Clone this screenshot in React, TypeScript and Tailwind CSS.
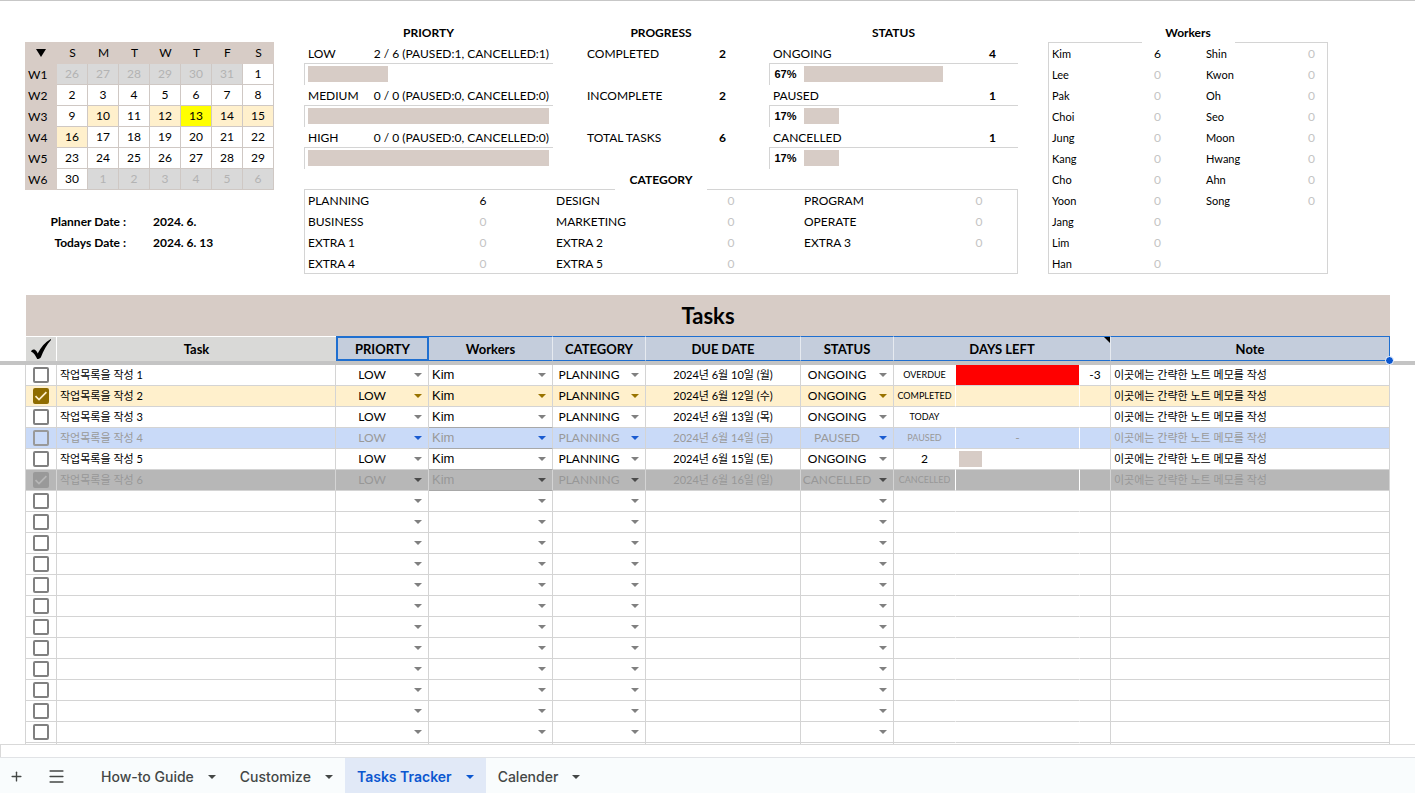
import React from 'react';
import { Menu, Plus } from 'lucide-react';

const BASE_FONT = "font-['Lato','Noto_Sans_CJK_KR',sans-serif]";

function Caret({ className = '' }: { className?: string }) {
  return (
    <svg viewBox="0 0 8 4" className={`h-1 w-2 shrink-0 ${className}`} fill="currentColor" aria-hidden="true">
      <path d="M0 0h8L4 4z" />
    </svg>
  );
}

/* ---------- Calendar ---------- */

type Tone = 'plain' | 'out' | 'task' | 'today';
const DAY_TONES: Record<Tone, string> = {
  plain: 'bg-white',
  out: 'bg-[#d9d9d9] text-[#b3b3b3]',
  task: 'bg-[#fff0cc]',
  today: 'bg-[#ffff00]',
};
const TASK_DAYS = [10, 12, 14, 15, 16];

function dayInfo(week: number, col: number): { label: number; tone: Tone } {
  const n = week * 7 + col - 5;
  if (n < 1) return { label: n + 31, tone: 'out' };
  if (n > 30) return { label: n - 30, tone: 'out' };
  if (n === 13) return { label: n, tone: 'today' };
  return { label: n, tone: TASK_DAYS.includes(n) ? 'task' : 'plain' };
}

function Calendar() {
  return (
    <div>
      <table className="mt-5 w-full table-fixed border-separate border-spacing-0 bg-[#d7ccc6] text-center text-xs">
        <colgroup>
          <col className="w-8" />
        </colgroup>
        <thead>
          <tr className="h-[22px]">
            <th className="p-0">
              <svg viewBox="0 0 10 8" className="mx-auto h-2 w-2.5" aria-label="Month">
                <path d="M0 0h10L5 8z" />
              </svg>
            </th>
            {['S', 'M', 'T', 'W', 'T', 'F', 'S'].map((d, i) => (
              <th key={i} className="p-0 font-normal">{d}</th>
            ))}
          </tr>
        </thead>
        <tbody>
          {[0, 1, 2, 3, 4, 5].map((week) => (
            <tr key={week} className="h-[21px]">
              <th className="p-0 pl-[3px] text-left font-normal">W{week + 1}</th>
              {[0, 1, 2, 3, 4, 5, 6].map((col) => {
                const { label, tone } = dayInfo(week, col);
                return (
                  <td key={col} className={`border-r border-b border-[#cfc8c4] p-0 ${DAY_TONES[tone]}`}>
                    {label}
                  </td>
                );
              })}
            </tr>
          ))}
        </tbody>
      </table>
      <dl className="mt-[21px] grid grid-cols-[101px_1fr] gap-x-[27px] text-xs leading-[21px] font-bold">
        <dt className="text-right">Planner Date :</dt>
        <dd>2024. 6.</dd>
        <dt className="text-right">Todays Date :</dt>
        <dd>2024. 6. 13</dd>
      </dl>
    </div>
  );
}

/* ---------- Summary panels ---------- */

function Title({ children }: { children: React.ReactNode }) {
  return <h2 className="h-[21px] text-center text-xs leading-[21px] font-bold">{children}</h2>;
}

function PriorityPanel() {
  const rows = [
    { name: 'LOW', info: '2 / 6 (PAUSED:1, CANCELLED:1)', pct: 33.3 },
    { name: 'MEDIUM', info: '0 / 0 (PAUSED:0, CANCELLED:0)', pct: 100 },
    { name: 'HIGH', info: '0 / 0 (PAUSED:0, CANCELLED:0)', pct: 100 },
  ];
  return (
    <section>
      <Title>PRIORTY</Title>
      {rows.map((r) => (
        <div key={r.name}>
          <div className="flex h-[21px] justify-between border-b border-[#d4d4d4] px-1 leading-[21px]">
            <span>{r.name}</span>
            <span>{r.info}</span>
          </div>
          <div className="h-[21px] border-l border-[#d4d4d4] pt-0.5 pr-1 pl-[3px]">
            <div className="h-4 bg-[#d7ccc6]" style={{ width: `${r.pct}%` }} />
          </div>
        </div>
      ))}
    </section>
  );
}

function ProgressPanel() {
  const rows = [['COMPLETED', 2], ['INCOMPLETE', 2], ['TOTAL TASKS', 6]];
  return (
    <section>
      <Title>PROGRESS</Title>
      {rows.map(([name, n]) => (
        <div key={name} className="flex h-[42px] justify-between pr-[31px] pl-[34px] leading-[21px]">
          <span>{name}</span>
          <span className="w-[31px] text-center font-bold">{n}</span>
        </div>
      ))}
    </section>
  );
}

function StatusPanel() {
  const rows = [
    { name: 'ONGOING', n: 4, pct: 67 },
    { name: 'PAUSED', n: 1, pct: 17 },
    { name: 'CANCELLED', n: 1, pct: 17 },
  ];
  return (
    <section>
      <Title>STATUS</Title>
      {rows.map((r) => (
        <div key={r.name}>
          <div className="flex h-[21px] justify-between border-b border-[#d4d4d4] pr-2.5 pl-1 leading-[21px]">
            <span>{r.name}</span>
            <span className="w-[31px] text-center font-bold">{r.n}</span>
          </div>
          <div className="flex h-[21px] border-l border-[#d4d4d4] pt-0.5 pr-1.5">
            <span className="mr-[3px] w-[31px] text-center font-['Liberation_Sans',sans-serif] text-[11px] leading-4 font-bold">
              {r.pct}%
            </span>
            <div className="flex-1">
              <div className="h-4 bg-[#d7ccc6]" style={{ width: `${r.pct}%` }} />
            </div>
          </div>
        </div>
      ))}
    </section>
  );
}

const CATEGORIES: [string, number][] = [
  ['PLANNING', 6], ['DESIGN', 0], ['PROGRAM', 0],
  ['BUSINESS', 0], ['MARKETING', 0], ['OPERATE', 0],
  ['EXTRA 1', 0], ['EXTRA 2', 0], ['EXTRA 3', 0],
  ['EXTRA 4', 0], ['EXTRA 5', 0],
];

function CategoryPanel() {
  return (
    <section>
      <div className="flex">
        <div className="flex-1 border-b border-[#d4d4d4]" />
        <div className="w-[92px]"><Title>CATEGORY</Title></div>
        <div className="flex-1 border-b border-[#d4d4d4]" />
      </div>
      <div className="grid h-[84px] auto-rows-[21px] grid-cols-[248fr_248fr_216fr] border-x border-b border-[#d4d4d4]">
        {CATEGORIES.map(([name, n]) => (
          <div key={name} className="flex pl-[3px] leading-[21px]">
            <span className="w-36">{name}</span>
            <span className={`w-[62px] text-center ${n ? '' : 'text-[#c4c4c4]'}`}>{n}</span>
          </div>
        ))}
      </div>
    </section>
  );
}

const WORKERS_A: [string, number][] = [
  ['Kim', 6], ['Lee', 0], ['Pak', 0], ['Choi', 0], ['Jung', 0], ['Kang', 0],
  ['Cho', 0], ['Yoon', 0], ['Jang', 0], ['Lim', 0], ['Han', 0],
];
const WORKERS_B: [string, number][] = [
  ['Shin', 0], ['Kwon', 0], ['Oh', 0], ['Seo', 0], ['Moon', 0], ['Hwang', 0], ['Ahn', 0], ['Song', 0],
];

function WorkersPanel() {
  return (
    <section>
      <div className="flex">
        <div className="flex-1 border-b border-[#d4d4d4]" />
        <div className="w-[93px]"><Title>Workers</Title></div>
        <div className="flex-1 border-b border-[#d4d4d4]" />
      </div>
      <div className="grid h-[231px] grid-cols-[155fr_123fr] border-x border-b border-[#d4d4d4] text-[11px]">
        {[WORKERS_A, WORKERS_B].map((list, i) => (
          <div key={i}>
            {list.map(([name, n]) => (
              <div key={name} className="flex h-[21px] pl-[3px] leading-[21px]">
                <span className="w-[90px]">{name}</span>
                <span className={`w-[31px] text-center text-xs leading-[21px] ${n ? '' : 'text-[#c4c4c4]'}`}>{n}</span>
              </div>
            ))}
          </div>
        ))}
      </div>
    </section>
  );
}

/* ---------- Task table ---------- */

type RowTone = 'plain' | 'done' | 'paused' | 'cancelled';
interface Task {
  checked?: boolean;
  tone: RowTone;
  name: string;
  priority: string;
  worker: string;
  category: string;
  due: string;
  status: string;
  left: string;
  bar?: 'overdue' | 'remaining' | 'dash';
  extra?: string;
  note: string;
}

const NOTE = '이곳에는 간략한 노트 메모를 작성';
const base = { priority: 'LOW', worker: 'Kim', category: 'PLANNING', note: NOTE };
const EMPTY: Task = { tone: 'plain', name: '', priority: '', worker: '', category: '', due: '', status: '', left: '', note: '' };

const TASKS: Task[] = [
  { ...base, tone: 'plain', name: '작업목록을 작성 1', due: '2024년 6월 10일 (월)', status: 'ONGOING', left: 'OVERDUE', bar: 'overdue', extra: '-3' },
  { ...base, tone: 'done', checked: true, name: '작업목록을 작성 2', due: '2024년 6월 12일 (수)', status: 'ONGOING', left: 'COMPLETED' },
  { ...base, tone: 'plain', name: '작업목록을 작성 3', due: '2024년 6월 13일 (목)', status: 'ONGOING', left: 'TODAY' },
  { ...base, tone: 'paused', name: '작업목록을 작성 4', due: '2024년 6월 14일 (금)', status: 'PAUSED', left: 'PAUSED', bar: 'dash' },
  { ...base, tone: 'plain', name: '작업목록을 작성 5', due: '2024년 6월 15일 (토)', status: 'ONGOING', left: '2', bar: 'remaining' },
  { ...base, tone: 'cancelled', checked: true, name: '작업목록을 작성 6', due: '2024년 6월 16일 (일)', status: 'CANCELLED', left: 'CANCELLED' },
  ...Array.from({ length: 13 }, () => EMPTY),
];

const ROW_TONES: Record<RowTone, string> = {
  plain: 'bg-white text-black',
  done: 'bg-[#fff0cc] text-black',
  paused: 'bg-[#c9daf8] text-[#999999]',
  cancelled: 'bg-[#b7b7b7] text-[#979797]',
};
const CARET_TONES: Record<RowTone, string> = {
  plain: 'text-[#808080]',
  done: 'text-[#997300]',
  paused: 'text-[#1a5bd0]',
  cancelled: 'text-[#4a4a4a]',
};
const BOX_TONES: Record<RowTone, string> = {
  plain: 'border-[#808080]',
  done: 'border-[#8f6c00] bg-[#8f6c00]',
  paused: 'border-[#999999]',
  cancelled: 'border-[#999999] bg-[#999999]',
};
const TICK_TONES: Record<RowTone, string> = {
  plain: 'text-white',
  done: 'text-[#fff0cc]',
  paused: 'text-white',
  cancelled: 'text-[#b7b7b7]',
};

const CELL = 'h-[21px] border-r border-b border-[#d4d4d4] p-0';

function Dropdown({ label, value, options, tone, left }: {
  label: string; value: string; options: string[]; tone: RowTone; left?: boolean;
}) {
  return (
    <div className="relative flex h-5 items-center">
      <select
        aria-label={label}
        defaultValue={value}
        className={`h-5 w-full appearance-none bg-transparent p-0 pr-5 ${
          left ? "pl-[3px] text-left font-['Liberation_Sans',sans-serif] text-[13px]" : 'text-center text-xs'
        }`}
      >
        <option value="" />
        {options.map((o) => <option key={o} value={o}>{o}</option>)}
      </select>
      <Caret className={`pointer-events-none absolute right-1.5 ${CARET_TONES[tone]}`} />
    </div>
  );
}

function TaskRow({ task, index }: { task: Task; index: number }) {
  const { tone } = task;
  const n = index + 1;
  const next = TASKS[index + 1];
  const strong = tone === 'paused' || tone === 'cancelled' || (next && (next.tone === 'paused' || next.tone === 'cancelled'));
  return (
    <tr className={ROW_TONES[tone]}>
      <td className={`${CELL} border-l`}>
        <div className="relative mx-auto size-4">
          <input
            type="checkbox"
            aria-label={`Task ${n} done`}
            defaultChecked={task.checked}
            className={`block size-4 appearance-none rounded-[2px] border-2 ${BOX_TONES[tone]}`}
          />
          {task.checked && (
            <svg viewBox="0 0 16 16" className={`pointer-events-none absolute inset-0 size-4 ${TICK_TONES[tone]}`} fill="none" stroke="currentColor" strokeWidth="1.7">
              <path d="M2.5 8.2 6 11.6 13.4 4.2" />
            </svg>
          )}
        </div>
      </td>
      <td className={`${CELL} pl-[3px] text-[11px] leading-5`}>{task.name}</td>
      <td className={CELL}>
        <Dropdown label={`Priority ${n}`} value={task.priority} options={['LOW', 'MEDIUM', 'HIGH']} tone={tone} />
      </td>
      <td className={`h-[21px] border-r border-b border-r-[#d4d4d4] p-0 ${strong ? 'border-b-[#a8a8a8]' : 'border-b-[#d4d4d4]'}`}>
        <Dropdown label={`Worker ${n}`} value={task.worker} options={['Kim', 'Lee', 'Pak', 'Choi']} tone={tone} left />
      </td>
      <td className={CELL}>
        <Dropdown label={`Category ${n}`} value={task.category} options={['PLANNING', 'DESIGN', 'PROGRAM']} tone={tone} />
      </td>
      <td className={`${CELL} text-center text-[11px] leading-5`}>{task.due}</td>
      <td className={CELL}>
        <Dropdown label={`Status ${n}`} value={task.status} options={['ONGOING', 'PAUSED', 'CANCELLED']} tone={tone} />
      </td>
      <td className={`h-[21px] border-r border-b border-r-white border-b-[#d4d4d4] p-0 text-center leading-5 ${task.left === '2' ? 'text-xs' : 'text-[9px]'}`}>
        {task.left}
      </td>
      <td className={`h-[21px] border-r border-b border-r-white border-b-[#d4d4d4] p-0 text-center leading-5 ${task.bar === 'overdue' ? 'bg-[#ff0000]' : ''}`}>
        {task.bar === 'dash' && '-'}
        {task.bar === 'remaining' && <div className="ml-[3px] h-4 w-[19%] bg-[#d7ccc6]" />}
      </td>
      <td className={`${CELL} text-center leading-5`}>{task.extra}</td>
      <td className={`${CELL} pl-[3px] text-[11px] leading-5`}>{task.note}</td>
    </tr>
  );
}

const SEL = 'h-[25px] border-y border-y-[#1f6fd0] border-r border-r-[#e6eaf0] bg-[#c4cddc] p-0';

function TaskTable() {
  return (
    <div className="relative px-[26px]">
      <table className="-ml-px w-[calc(100%+1px)] table-fixed border-separate border-spacing-0">
        <colgroup>
          <col className="w-8" />
          <col className="w-[279px]" />
          <col className="w-[93px]" />
          <col className="w-[124px]" />
          <col className="w-[93px]" />
          <col className="w-[155px]" />
          <col className="w-[93px]" />
          <col className="w-[62px]" />
          <col className="w-[124px]" />
          <col className="w-[31px]" />
          <col className="w-[279px]" />
        </colgroup>
        <thead>
          <tr>
            <th colSpan={11} className="h-[41px] border-l border-white bg-[#d7ccc6] p-0 text-[22px] leading-10 font-bold">Tasks</th>
          </tr>
          <tr className="text-[13px] leading-5">
            <th className="h-[25px] border-t border-r border-l border-white bg-[#d9d9d7] p-0">
              <svg viewBox="0 0 20 20" className="mx-auto size-5" aria-label="Done">
                <path d="M0 12.4C.6 10.700 2.400 9.900 3.900 10.800c1.300.8 2.100 2.100 2.800 3.700C10 8.200 14 3.200 19.800 0l.2.9C15.600 5.700 12.400 11.600 9.900 18.200 9.300 19.300 7.800 19.900 6.200 20 4.700 16.600 3 13.700 0 12.400z" />
              </svg>
            </th>
            <th className="h-[25px] border-t border-white bg-[#d9d9d7] p-0">Task</th>
            <th className="h-[25px] border-2 border-[#1f6fd0] bg-[#c4cddc] p-0">PRIORTY</th>
            <th className={SEL}>Workers</th>
            <th className={SEL}>CATEGORY</th>
            <th className={SEL}>DUE DATE</th>
            <th className={SEL}>STATUS</th>
            <th colSpan={3} className={`${SEL} relative`}>
              DAYS LEFT
              <svg viewBox="0 0 6 6" className="absolute top-0 right-0 size-1.5" aria-hidden="true">
                <path d="M0 0h6v6z" />
              </svg>
            </th>
            <th className="relative h-[25px] border-y border-r border-[#1f6fd0] bg-[#c4cddc] p-0">
              Note
              <span className="absolute -right-[5px] -bottom-[5px] z-20 size-[9px] rounded-full border border-white bg-[#0b57d0]" />
            </th>
          </tr>
          <tr aria-hidden="true">
            <td colSpan={11} className="h-1 p-0" />
          </tr>
        </thead>
        <tbody className="text-xs">
          {TASKS.map((t, i) => <TaskRow key={i} task={t} index={i} />)}
        </tbody>
      </table>
      <div className="absolute inset-x-0 top-[66px] h-1 bg-[#c4c4c4]" />
    </div>
  );
}

/* ---------- Sheet tabs ---------- */

function SheetTabs() {
  const tabs = ['How-to Guide', 'Customize', 'Tasks Tracker', 'Calender'];
  return (
    <nav className="flex h-9 shrink-0 items-stretch border-t border-[#e1e3e6] bg-[#f9fcfd] font-['Inter',sans-serif] text-sm font-medium text-[#444746]">
      <button aria-label="Add sheet" className="flex w-8 items-center justify-center pt-0.5">
        <Plus size={15} strokeWidth={2.2} />
      </button>
      <button aria-label="All sheets" className="mr-[17px] ml-2 flex w-8 items-center justify-center pt-0.5">
        <Menu size={19} strokeWidth={2} />
      </button>
      {tabs.map((t) => (
        <button
          key={t}
          className={`flex items-center gap-[14px] px-3 pt-0.5 ${
            t === 'Tasks Tracker' ? 'bg-[#e1e9f7] font-semibold text-[#0b57d0]' : ''
          }`}
        >
          {t}
          <Caret />
        </button>
      ))}
    </nav>
  );
}

export default function App() {
  return (
    <div className={`flex h-screen flex-col overflow-hidden bg-white text-black ${BASE_FONT}`}>
      <main className="min-h-0 flex-1 overflow-hidden border-t border-[#c7c7c7]">
        <div className="grid grid-cols-[249px_minmax(0,1fr)_280px] gap-x-[30px] pt-[21px] pr-[87px] pb-[21px] pl-[25px] text-xs">
          <Calendar />
          <div>
            <div className="grid grid-cols-[249fr_216fr_249fr]">
              <PriorityPanel />
              <ProgressPanel />
              <StatusPanel />
            </div>
            <CategoryPanel />
          </div>
          <WorkersPanel />
        </div>
        <TaskTable />
      </main>
      <div className="h-[13px] shrink-0 border-t border-l border-[#d9d9d9]" />
      <SheetTabs />
    </div>
  );
}
